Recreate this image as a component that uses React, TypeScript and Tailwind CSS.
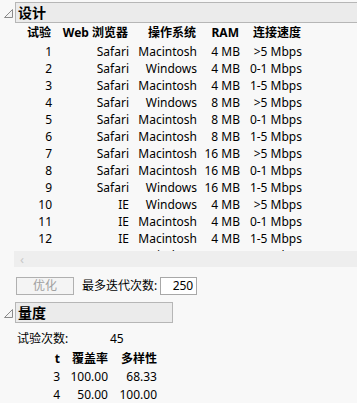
import React from 'react';

type Row = [string, string, string, string, string];

const rows: Row[] = [
  ['1', 'Safari', 'Macintosh', '4 MB', '>5 Mbps'],
  ['2', 'Safari', 'Windows', '4 MB', '0-1 Mbps'],
  ['3', 'Safari', 'Macintosh', '4 MB', '1-5 Mbps'],
  ['4', 'Safari', 'Windows', '8 MB', '>5 Mbps'],
  ['5', 'Safari', 'Macintosh', '8 MB', '0-1 Mbps'],
  ['6', 'Safari', 'Macintosh', '8 MB', '1-5 Mbps'],
  ['7', 'Safari', 'Macintosh', '16 MB', '>5 Mbps'],
  ['8', 'Safari', 'Macintosh', '16 MB', '0-1 Mbps'],
  ['9', 'Safari', 'Windows', '16 MB', '1-5 Mbps'],
  ['10', 'IE', 'Windows', '4 MB', '>5 Mbps'],
  ['11', 'IE', 'Macintosh', '4 MB', '0-1 Mbps'],
  ['12', 'IE', 'Macintosh', '4 MB', '1-5 Mbps'],
  ['13', 'IE', 'Windows', '8 MB', '0-1 Mbps'],
];

// column right edges: 52, 129, 197, 240, 302
const cols = ['w-[52px]', 'w-[77px]', 'w-[68px]', 'w-[43px]', 'w-[62px]'];

function Disclosure() {
  return (
    <svg width="15" height="12" viewBox="0 0 15 12" className="shrink-0">
      <path d="M12.5 2.5 L12.5 10.5 L4.5 10.5 Z" fill="#f4f4f4" stroke="#8a8a8a" strokeWidth="1" />
    </svg>
  );
}

function SectionHeader({ title, wide }: { title: string; wide?: boolean }) {
  return (
    <div className="flex items-center">
      <Disclosure />
      <div
        className={
          'flex h-[21px] items-center border border-[#b6b6b6] bg-[#ebebeb] pl-[2px] text-[14px] font-bold ' +
          (wide ? 'flex-1 border-r-0' : 'w-[158px]')
        }
      >
        {title}
      </div>
    </div>
  );
}

export default function App() {
  return (
    <div
      className="h-[403px] w-[357px] overflow-hidden bg-[#f8f8f8] text-[12px] text-black"
      style={{ fontFamily: '"Noto Sans", "Noto Sans CJK SC", sans-serif' }}
    >
      {/* 设计 */}
      <div className="pt-[2px]">
        <SectionHeader title="设计" wide />
      </div>

      <div className="h-[228px] overflow-hidden">
        <div className="flex h-[20px] items-center font-bold">
          {['试验', 'Web 浏览器', '操作系统', 'RAM', '连接速度'].map((h, i) => (
            <div key={h} className={cols[i] + ' shrink-0 text-right ' + (i === 0 ? 'pr-px' : 'pr-px')}>
              {h}
            </div>
          ))}
        </div>
        {rows.map((r) => (
          <div key={r[0]} className="flex h-[17px] items-center leading-none">
            {r.map((c, i) => (
              <div key={i} className={cols[i] + ' shrink-0 whitespace-nowrap text-right'}>
                {c}
              </div>
            ))}
          </div>
        ))}
      </div>

      {/* horizontal scrollbar */}
      <div className="ml-[14px] flex h-[16px] items-center bg-[#eeeeee] pl-[6px] text-[13px] leading-none text-[#c8c8c8]">
        ‹
      </div>

      {/* controls */}
      <div className="mt-[10px] flex items-center pl-[16px]">
        <button className="h-[18px] w-[58px] border border-[#b0b0b0] bg-[#f4f4f4] text-[12px] leading-none text-[#a0a0a0]">
          优化
        </button>
        <span className="ml-[8px]">最多迭代次数:</span>
        <div className="ml-[3px] flex h-[18px] w-[37px] items-center justify-end border border-[#a8a8a8] bg-white pr-[3px]">
          250
        </div>
      </div>

      {/* 量度 */}
      <div className="mt-[7px]">
        <SectionHeader title="量度" />
      </div>

      <div className="mt-[7px] flex h-[18px] items-center pl-[17px]">
        <span className="w-[93px]">试验次数:</span>
        <span>45</span>
      </div>

      <div className="mt-[2px]">
        <div className="flex h-[18px] items-center font-bold">
          <div className="w-[60px] text-right">t</div>
          <div className="w-[48px] text-right">覆盖率</div>
          <div className="w-[49px] text-right">多样性</div>
        </div>
        {[
          ['3', '100.00', '68.33'],
          ['4', '50.00', '100.00'],
        ].map((r) => (
          <div key={r[0]} className="flex h-[18px] items-center">
            <div className="w-[60px] text-right">{r[0]}</div>
            <div className="w-[48px] text-right">{r[1]}</div>
            <div className="w-[49px] text-right">{r[2]}</div>
          </div>
        ))}
      </div>
    </div>
  );
}
